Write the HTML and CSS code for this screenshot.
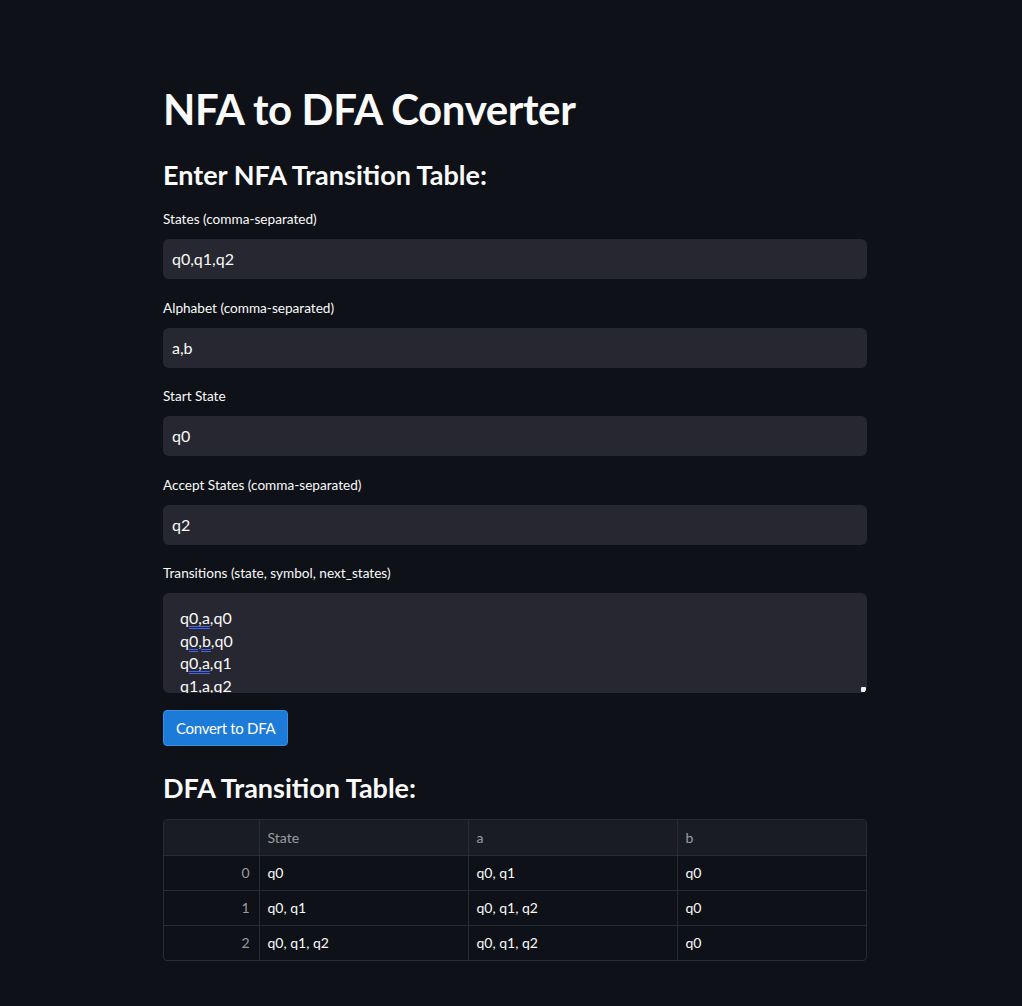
FILE: index.html
```html
<!DOCTYPE html>
<html lang="en">
<head>
<meta charset="utf-8">
<title>NFA to DFA Converter</title>
<link rel="stylesheet" href="styles.css">
</head>
<body>
<main class="main">
  <h1 class="title">NFA to DFA Converter</h1>
  <h3 class="subheader">Enter NFA Transition Table:</h3>

  <div class="field">
    <label class="label">States (comma-separated)</label>
    <div class="input">q0,q1,q2</div>
  </div>
  <div class="field">
    <label class="label">Alphabet (comma-separated)</label>
    <div class="input">a,b</div>
  </div>
  <div class="field">
    <label class="label">Start State</label>
    <div class="input">q0</div>
  </div>
  <div class="field">
    <label class="label">Accept States (comma-separated)</label>
    <div class="input">q2</div>
  </div>
  <div class="field">
    <label class="label">Transitions (state, symbol, next_states)</label>
    <div class="textarea">
      <div class="line">q<span class="spell">0,a</span>,q0</div>
      <div class="line">q<span class="spell">0,b</span>,q0</div>
      <div class="line">q<span class="spell">0,a</span>,q1</div>
      <div class="line">q<span class="spell">1,a</span>,q2</div>
    </div>
  </div>

  <button class="btn">Convert to DFA</button>

  <h3 class="subheader result">DFA Transition Table:</h3>

  <div class="table-wrap">
    <table class="df">
      <thead>
        <tr><th class="idx"></th><th class="c1">State</th><th class="c2">a</th><th class="c3">b</th></tr>
      </thead>
      <tbody>
        <tr><td class="idx">0</td><td>q0</td><td>q0, q1</td><td>q0</td></tr>
        <tr><td class="idx">1</td><td>q0, q1</td><td>q0, q1, q2</td><td>q0</td></tr>
        <tr><td class="idx">2</td><td>q0, q1, q2</td><td>q0, q1, q2</td><td>q0</td></tr>
      </tbody>
    </table>
  </div>
</main>
</body>
</html>
```
FILE: styles.css
```css
html, body {
  margin: 0;
  background: #0e1117;
  color: #fafafa;
  font-family: Lato, "Noto Sans", sans-serif;
}
.main {
  width: 704px;
  margin-left: 163px;
  padding-top: 80px;
  padding-bottom: 44px;
}
.title {
  margin: 0;
  font-size: 42px;
  font-weight: 700;
  line-height: 58px;
  letter-spacing: -0.4px;
}
.subheader {
  margin: 0;
  font-size: 27px;
  font-weight: 700;
  line-height: 36px;
  padding-top: 19px;
}
.field {
  margin-top: 16px;
}
.field + .field {
  margin-top: 18.5px;
}
.label {
  display: block;
  font-size: 13.6px;
  line-height: 20px;
  margin-bottom: 10px;
}
.input {
  height: 40px;
  box-sizing: border-box;
  background: #262730;
  border-radius: 6px;
  padding: 0 9px;
  font-size: 16px;
  line-height: 40px;
}
.textarea {
  position: relative;
  height: 100px;
  box-sizing: border-box;
  background: #262730;
  border-radius: 6px;
  padding: 14px 17px 0;
  font-size: 16px;
  line-height: 22.5px;
  overflow: hidden;
}
.textarea::after {
  content: "";
  position: absolute;
  right: 1px;
  bottom: 1px;
  width: 5px;
  height: 5px;
  background: #f0f0f0;
  border-radius: 1px;
}
.spell {
  text-decoration: underline double #4466ee;
  text-decoration-thickness: 1px;
  text-underline-offset: 2px;
}
.btn {
  display: block;
  margin-top: 17px;
  height: 36px;
  padding: 0 12px;
  background: #1c7ad9;
  border: 1px solid #3a8ee6;
  border-radius: 4px;
  color: #ffffff;
  font-family: inherit;
  font-size: 15px;
  letter-spacing: -0.3px;
}
.result {
  padding-top: 24px;
}
.table-wrap {
  margin-top: 13px;
  border: 1px solid #2a2c33;
  border-radius: 4px;
  overflow: hidden;
}
.df {
  width: 100%;
  border-collapse: collapse;
  table-layout: fixed;
  font-size: 14px;
}
.df th, .df td {
  height: 35px;
  box-sizing: border-box;
  padding: 0 8px;
  text-align: left;
  font-weight: 400;
  border-right: 1px solid #2a2c33;
  border-bottom: 1px solid #2a2c33;
}
.df tr > :last-child { border-right: none; }
.df tbody tr:last-child td { border-bottom: none; }
.df thead th {
  background: #1a1c23;
  color: #9a9ca2;
}
.df .idx {
  width: 95px;
  text-align: right;
  padding-right: 9px;
  color: #9a9ca2;
}
.df .c1, .df .c2 { width: 209px; }
```
